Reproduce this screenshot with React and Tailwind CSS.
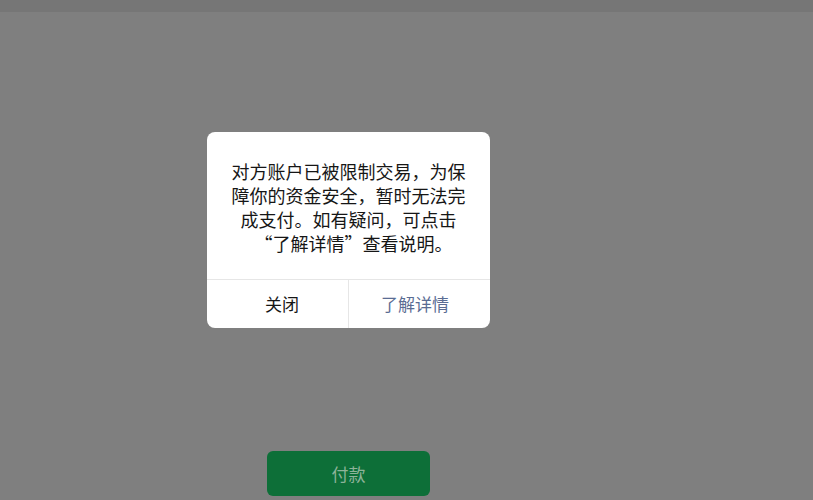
export default function App() {
  const font = { fontFamily: '"Noto Sans CJK SC", "Noto Sans", sans-serif' };
  return (
    <div className="flex h-[500px] w-[813px] flex-col overflow-hidden bg-[#7f7f7f]" style={font}>
      <div className="h-[12px] shrink-0 bg-[#767676]" />
      <div className="flex flex-col pl-[207px] pt-[120px]">
        <div className="flex h-[196px] w-[283px] flex-col overflow-hidden rounded-[8px] bg-white">
          <div className="flex h-[147px] items-start justify-center px-[20px] pt-[27px]">
            <p className="text-center text-[18px] leading-[24px] text-[#161616]">
              对方账户已被限制交易，为保<br />
              障你的资金安全，暂时无法完<br />
              成支付。如有疑问，可点击<br />
              <span className="pl-[10px]">“了解详情”查看说明。</span>
            </p>
          </div>
          <div className="flex h-[49px] border-t border-[#e6e6e6]">
            <button className="flex w-[141px] shrink-0 items-center justify-center pl-[9px] text-[17px] text-[#161616]">
              关闭
            </button>
            <div className="w-px shrink-0 bg-[#e6e6e6]" />
            <button className="flex flex-1 items-center justify-center pr-[9px] text-[17px] text-[#5a6c93]">
              了解详情
            </button>
          </div>
        </div>
        <div className="ml-[60px] mt-[123px] flex h-[45px] w-[163px] items-center justify-center rounded-[6px] bg-[#0d6f38]">
          <span className="text-[17px] text-[#8eb39a]">付款</span>
        </div>
      </div>
    </div>
  );
}
